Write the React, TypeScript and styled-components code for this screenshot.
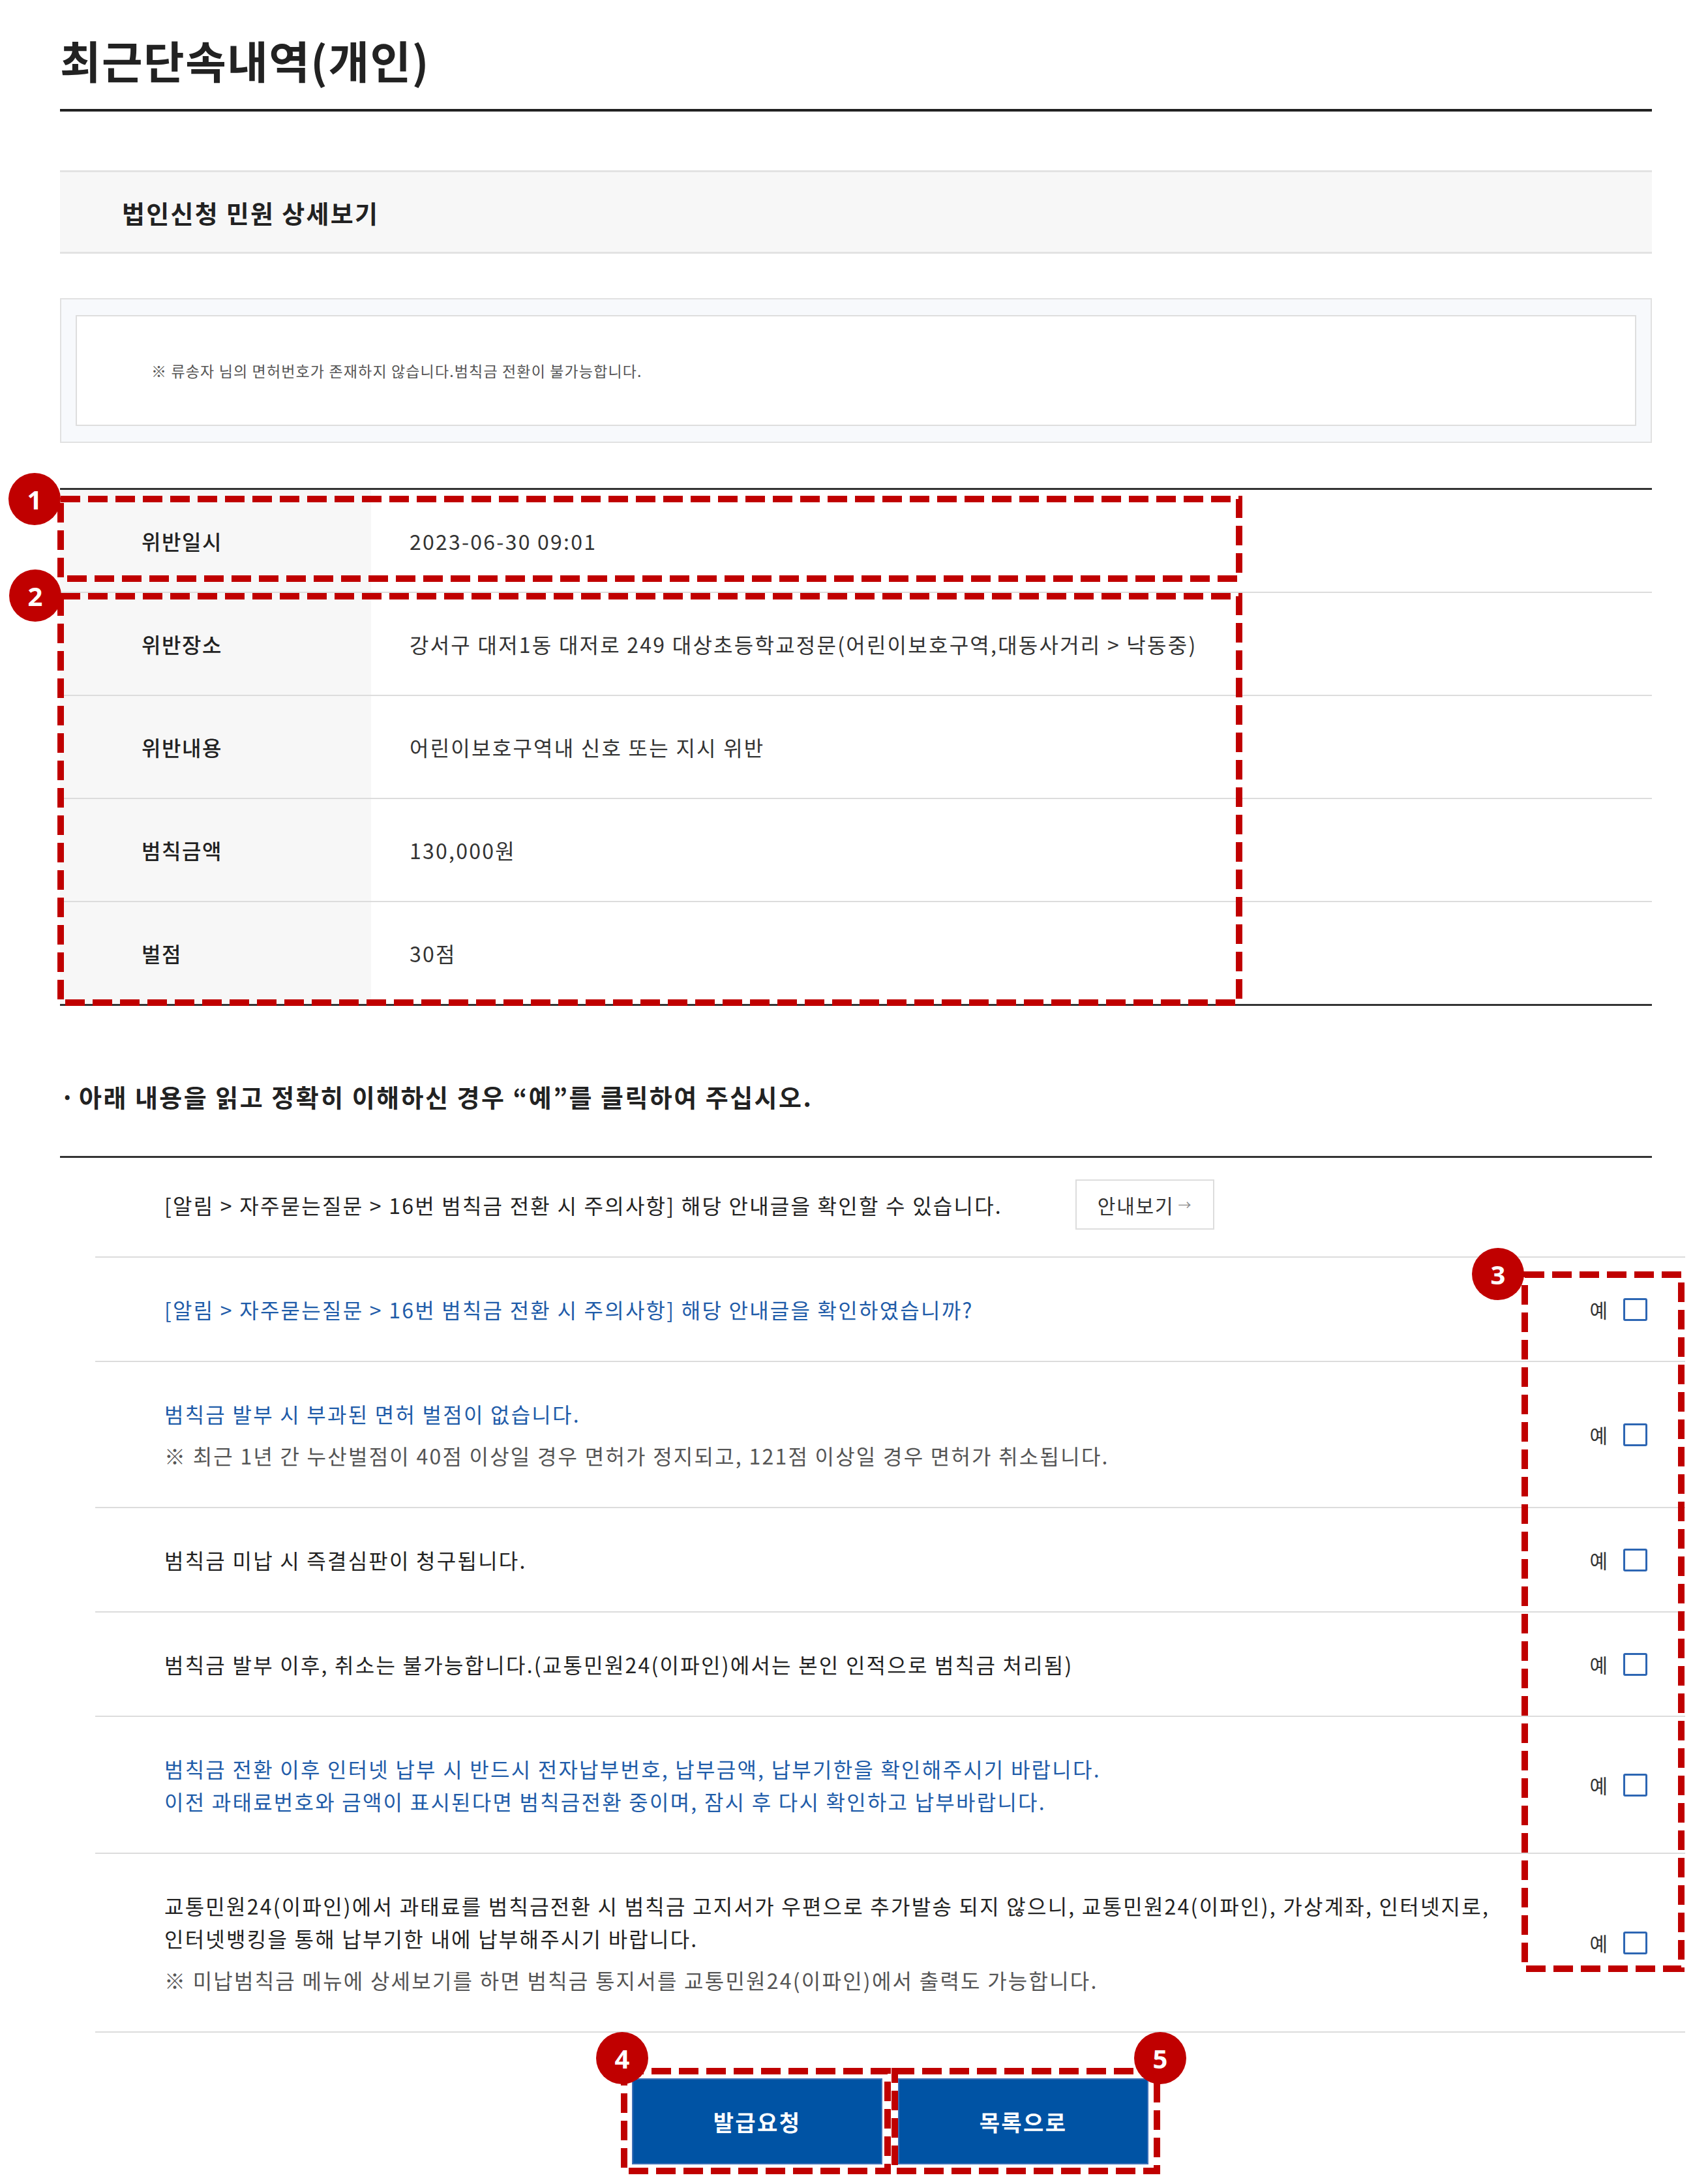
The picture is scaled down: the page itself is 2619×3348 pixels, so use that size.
import React from 'react';
import styled, { createGlobalStyle } from 'styled-components';

const RED = '#c00000';
const BLUE = '#1f5ca9';

const GlobalStyle = createGlobalStyle`
  html, body {
    margin: 0;
    padding: 0;
    background: #fff;
  }
  body {
    font-family: 'Noto Sans CJK KR', 'Noto Sans', sans-serif;
    color: #222;
  }
  * {
    box-sizing: border-box;
  }
`;

const Page = styled.div`
  width: 2619px;
  padding: 46px 86px 40px 92px;
`;

const Title = styled.h1`
  margin: 0;
  font-size: 68px;
  line-height: 92px;
  font-weight: 700;
  letter-spacing: 1.5px;
  padding-bottom: 29px;
  border-bottom: 4px solid #222;
`;

const SubHeader = styled.h2`
  margin: 90px 0 0;
  height: 128px;
  display: flex;
  align-items: center;
  padding-left: 95px;
  background: #f7f7f7;
  border-top: 3px solid #e3e3e3;
  border-bottom: 3px solid #e3e3e3;
  font-size: 38px;
  font-weight: 700;
  letter-spacing: 0.06em;
`;

const NoticeOuter = styled.div`
  margin-top: 68px;
  padding: 24px 22px;
  background: #f7f9fc;
  border: 2px solid #e1e1e1;
`;

const NoticeInner = styled.p`
  margin: 0;
  height: 170px;
  display: flex;
  align-items: center;
  padding-left: 114px;
  background: #fff;
  border: 2px solid #dedede;
  font-size: 23px;
  letter-spacing: 0.05em;
  color: #555;
`;

const TableWrap = styled.div`
  position: relative;
  margin-top: 69px;
`;

const InfoTable = styled.div`
  border-top: 3px solid #333;
  border-bottom: 3px solid #333;
`;

const InfoRow = styled.div`
  display: grid;
  grid-template-columns: 477px 1fr;
  height: 158px;
  border-bottom: 2px solid #dcdcdc;

  &:last-child {
    height: 156px;
    border-bottom: none;
  }
`;

const Th = styled.div`
  display: flex;
  align-items: center;
  padding-left: 125px;
  background: #f7f7f7;
  font-size: 32px;
  font-weight: 500;
  letter-spacing: 0.05em;
  color: #222;
`;

const Td = styled.div`
  display: flex;
  align-items: center;
  padding-left: 59px;
  font-size: 32px;
  letter-spacing: 0.07em;
  color: #333;
`;

const Heading = styled.h3`
  margin: 110px 0 0;
  padding-bottom: 63px;
  border-bottom: 3px solid #333;
  font-size: 38px;
  line-height: 57px;
  font-weight: 700;
  letter-spacing: 0.065em;
  display: flex;
  gap: 4px;

  &::before {
    content: '·';
  }
`;

const CheckList = styled.div`
  position: relative;
  margin: 0 -51px 0 54px;
`;

const Item = styled.div<{ $top?: number; $bottom?: number }>`
  display: flex;
  align-items: center;
  padding: ${p => p.$top ?? 54}px 58px ${p => p.$bottom ?? 54}px 106px;
  border-bottom: 2px solid #dcdcdc;

  &:last-child {
    border-bottom: 3px solid #333;
  }
`;

const ItemText = styled.div`
  flex: 1;
  display: flex;
  flex-direction: column;
  gap: 14px;
`;

const Line = styled.p<{ $tone?: 'blue' | 'note' }>`
  margin: 0;
  font-size: 32px;
  line-height: 50px;
  letter-spacing: 0.07em;
  color: ${p => (p.$tone === 'blue' ? BLUE : p.$tone === 'note' ? '#555' : '#222')};
`;

const GuideButton = styled.button`
  margin-left: 112px;
  width: 213px;
  height: 77px;
  border: 2px solid #dddddd;
  background: #fff;
  font-family: inherit;
  font-size: 30px;
  letter-spacing: 0.06em;
  color: #333;
  display: flex;
  align-items: center;
  justify-content: center;
  gap: 6px;
  cursor: pointer;

  span {
    font-size: 20px;
    color: #888;
  }
`;

const ItemSpacer = styled.div`
  flex: 1;
`;

const Check = styled.label`
  display: flex;
  align-items: center;
  gap: 24px;
  font-size: 30px;
  color: #333;
`;

const CheckBox = styled.input`
  appearance: none;
  margin: 0;
  width: 37px;
  height: 35px;
  border: 3px solid #2d66b3;
  border-radius: 3px;
  background: #fff;
`;

const ButtonBar = styled.div`
  display: flex;
  justify-content: center;
  gap: 24px;
  margin: 70px -51px 0 54px;
`;

const ButtonSlot = styled.div`
  position: relative;
`;

const PrimaryButton = styled.button`
  width: 384px;
  height: 132px;
  border: 2px solid #3b6fb6;
  background: #0053a4;
  color: #fff;
  font-family: inherit;
  font-size: 34px;
  font-weight: 700;
  letter-spacing: 0.07em;
  cursor: pointer;
`;

const Mark = styled.svg<{ $x: number; $y: number }>`
  position: absolute;
  left: ${p => p.$x}px;
  top: ${p => p.$y}px;
  pointer-events: none;
  overflow: visible;
`;

const Badge = styled.div<{ $x: number; $y: number }>`
  position: absolute;
  left: ${p => p.$x}px;
  top: ${p => p.$y}px;
  width: 80px;
  height: 80px;
  border-radius: 50%;
  background: ${RED};
  color: #fff;
  display: flex;
  align-items: center;
  justify-content: center;
  font-family: 'Noto Sans', sans-serif;
  font-size: 40px;
  font-weight: 700;
`;

function DashBox({ x, y, w, h }: { x: number; y: number; w: number; h: number }) {
  return (
    <Mark $x={x} $y={y} width={w} height={h} viewBox={`0 0 ${w} ${h}`}>
      <rect
        x={5}
        y={5}
        width={w - 10}
        height={h - 10}
        fill="none"
        stroke={RED}
        strokeWidth={10}
        strokeDasharray="30 12"
      />
    </Mark>
  );
}

const info = [
  { label: '위반일시', value: '2023-06-30 09:01' },
  { label: '위반장소', value: '강서구 대저1동 대저로 249 대상초등학교정문(어린이보호구역,대동사거리 > 낙동중)' },
  { label: '위반내용', value: '어린이보호구역내 신호 또는 지시 위반' },
  { label: '범칙금액', value: '130,000원' },
  { label: '벌점', value: '30점' },
];

type Tone = 'blue' | 'note' | undefined;
const checks: { lines: { text: string; tone?: Tone }[][] }[] = [
  { lines: [[{ text: '[알림 > 자주묻는질문 > 16번 범칙금 전환 시 주의사항] 해당 안내글을 확인하였습니까?', tone: 'blue' }]] },
  {
    lines: [
      [{ text: '범칙금 발부 시 부과된 면허 벌점이 없습니다.', tone: 'blue' }],
      [{ text: '※ 최근 1년 간 누산벌점이 40점 이상일 경우 면허가 정지되고, 121점 이상일 경우 면허가 취소됩니다.', tone: 'note' }],
    ],
  },
  { lines: [[{ text: '범칙금 미납 시 즉결심판이 청구됩니다.' }]] },
  { lines: [[{ text: '범칙금 발부 이후, 취소는 불가능합니다.(교통민원24(이파인)에서는 본인 인적으로 범칙금 처리됨)' }]] },
  {
    lines: [
      [
        { text: '범칙금 전환 이후 인터넷 납부 시 반드시 전자납부번호, 납부금액, 납부기한을 확인해주시기 바랍니다.', tone: 'blue' },
        { text: '이전 과태료번호와 금액이 표시된다면 범칙금전환 중이며, 잠시 후 다시 확인하고 납부바랍니다.', tone: 'blue' },
      ],
    ],
  },
  {
    lines: [
      [
        { text: '교통민원24(이파인)에서 과태료를 범칙금전환 시 범칙금 고지서가 우편으로 추가발송 되지 않으니, 교통민원24(이파인), 가상계좌, 인터넷지로,' },
        { text: '인터넷뱅킹을 통해 납부기한 내에 납부해주시기 바랍니다.' },
      ],
      [{ text: '※ 미납범칙금 메뉴에 상세보기를 하면 범칙금 통지서를 교통민원24(이파인)에서 출력도 가능합니다.', tone: 'note' }],
    ],
  },
];

const ParaGroup = styled.div`
  display: flex;
  flex-direction: column;
`;

export default function App() {
  return (
    <>
      <GlobalStyle />
      <Page>
        <Title>최근단속내역(개인)</Title>
        <SubHeader>법인신청 민원 상세보기</SubHeader>
        <NoticeOuter>
          <NoticeInner>※ 류송자 님의 면허번호가 존재하지 않습니다.범칙금 전환이 불가능합니다.</NoticeInner>
        </NoticeOuter>

        <TableWrap>
          <InfoTable>
            {info.map(row => (
              <InfoRow key={row.label}>
                <Th>{row.label}</Th>
                <Td>{row.value}</Td>
              </InfoRow>
            ))}
          </InfoTable>
          <DashBox x={-4} y={12} w={1817} h={132} />
          <DashBox x={-4} y={161} w={1817} h={633} />
          <Badge $x={-79} $y={-23}>1</Badge>
          <Badge $x={-78} $y={125}>2</Badge>
        </TableWrap>

        <Heading>아래 내용을 읽고 정확히 이해하신 경우 “예”를 클릭하여 주십시오.</Heading>

        <CheckList>
          <Item $top={33} $bottom={41}>
            <Line>[알림 &gt; 자주묻는질문 &gt; 16번 범칙금 전환 시 주의사항] 해당 안내글을 확인할 수 있습니다.</Line>
            <GuideButton type="button">
              안내보기<span>→</span>
            </GuideButton>
            <ItemSpacer />
          </Item>
          {checks.map((c, i) => (
            <Item key={i}>
              <ItemText>
                {c.lines.map((para, j) => (
                  <ParaGroup key={j}>
                    {para.map((l, k) => (
                      <Line key={k} $tone={l.tone}>
                        {l.text}
                      </Line>
                    ))}
                  </ParaGroup>
                ))}
              </ItemText>
              <Check>
                예
                <CheckBox type="checkbox" />
              </Check>
            </Item>
          ))}
          <DashBox x={2187} y={174} w={250} h={1074} />
          <Badge $x={2111} $y={138}>3</Badge>
        </CheckList>

        <ButtonBar>
          <ButtonSlot>
            <PrimaryButton type="button">발급요청</PrimaryButton>
            <DashBox x={-17} y={-16} w={414} h={163} />
            <Badge $x={-55} $y={-71}>4</Badge>
          </ButtonSlot>
          <ButtonSlot>
            <PrimaryButton type="button">목록으로</PrimaryButton>
            <DashBox x={-10} y={-16} w={412} h={163} />
            <Badge $x={362} $y={-71}>5</Badge>
          </ButtonSlot>
        </ButtonBar>
      </Page>
    </>
  );
}
